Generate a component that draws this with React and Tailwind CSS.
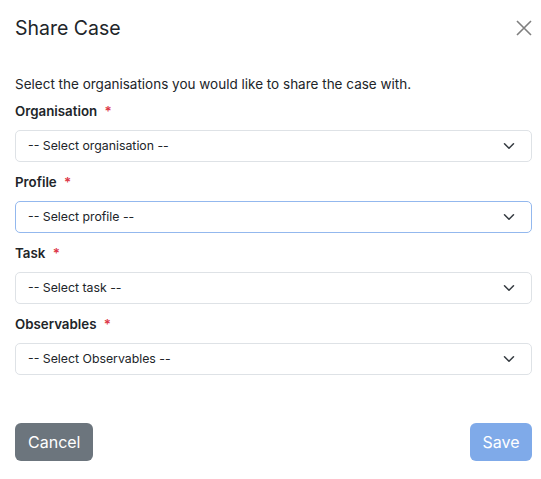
import React from 'react';

const fields = [
  { label: 'Organisation', placeholder: '-- Select organisation --' },
  { label: 'Profile', placeholder: '-- Select profile --', focused: true },
  { label: 'Task', placeholder: '-- Select task --' },
  { label: 'Observables', placeholder: '-- Select Observables --' },
];

const Chevron = () => (
  <svg width="12" height="12" viewBox="0 0 16 16" fill="none" className="shrink-0">
    <path d="m2 5 6 6 6-6" stroke="#343a40" strokeWidth="2" strokeLinecap="round" strokeLinejoin="round" />
  </svg>
);

export default function App() {
  return (
    <div className="w-[541px] h-[479px] bg-white text-[#212529] [font-family:Inter,sans-serif] flex flex-col">
      {/* cabeçalho */}
      <div className="flex items-center justify-between pl-[15px] pr-[9px] pt-4 pb-4">
        <h5 className="text-[19.5px] leading-[24px] font-normal">Share Case</h5>
        <button className="p-0 w-4 h-4 flex items-center justify-center">
          <svg width="16" height="16" viewBox="0 0 16 16">
            <path d="M1 1 15 15M15 1 1 15" stroke="#7f7f7f" strokeWidth="1.6" />
          </svg>
        </button>
      </div>

      <div className="pl-[15px] pr-[9px] pt-[18px]">
        <p className="text-[13.5px] leading-[21px] mb-[6px]">
          Select the organisations you would like to share the case with.
        </p>
        {fields.map(f => (
          <div key={f.label} className="mb-[10px]">
            <label className="block text-[13.3px] leading-[21px] font-semibold mb-2">
              {f.label} <span className="text-[#dc3545] ml-1">*</span>
            </label>
            <div
              className={`h-[32px] flex items-center justify-between pl-3 pr-4 rounded-[5px] border bg-white text-[12.3px] ${
                f.focused ? 'border-[#93b8ee]' : 'border-[#dee2e6]'
              }`}
            >
              <span>{f.placeholder}</span>
              <Chevron />
            </div>
          </div>
        ))}
      </div>

      <div className="flex items-center justify-between pl-[15px] pr-[9px] mt-[38px]">
        <button className="h-[38px] px-[13px] rounded-[6px] bg-[#6c757d] text-white text-[16px]">Cancel</button>
        <button className="h-[38px] px-[12.5px] rounded-[6px] bg-[#7faae9] text-white text-[16px]" disabled>
          Save
        </button>
      </div>
    </div>
  );
}
